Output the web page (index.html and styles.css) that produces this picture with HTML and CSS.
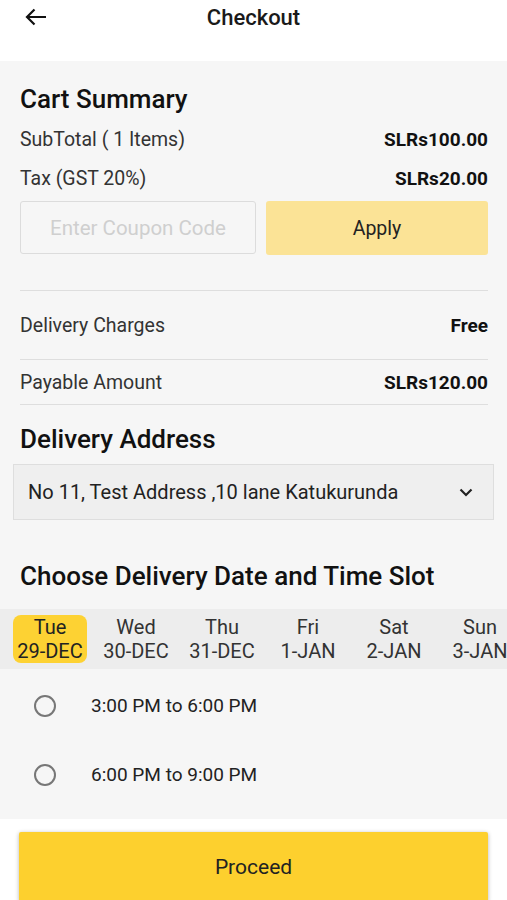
FILE: index.html
```html
<!DOCTYPE html>
<html lang="en">
<head>
  <meta charset="UTF-8">
  <meta name="viewport" content="width=device-width, initial-scale=1.0">
  <title>Checkout</title>
  <link rel="stylesheet" href="styles.css">
</head>
<body>
  <header class="topbar">
    <span class="back">
      <svg width="22" height="18" viewBox="0 0 22 18"><path d="M21 9H2M9.5 1.5L2 9l7.5 7.5" fill="none" stroke="#111" stroke-width="2.2"/></svg>
    </span>
    <h1>Checkout</h1>
  </header>

  <main class="content">
    <!-- 購物車 -->
    <section class="cart">
      <h2>Cart Summary</h2>
      <div class="row tight">
        <span>SubTotal ( 1 Items)</span>
        <b>SLRs100.00</b>
      </div>
      <div class="row tight">
        <span>Tax (GST 20%)</span>
        <b>SLRs20.00</b>
      </div>
      <div class="coupon">
        <div class="coupon-input">Enter Coupon Code</div>
        <button class="apply-btn">Apply</button>
      </div>
      <div class="row line">
        <span>Delivery Charges</span>
        <b>Free</b>
      </div>
      <div class="row line payable">
        <span>Payable Amount</span>
        <b>SLRs120.00</b>
      </div>
    </section>

    <section class="address">
      <h2>Delivery Address</h2>
      <div class="select">
        <span>No 11, Test Address ,10 lane Katukurunda</span>
        <svg width="14" height="9" viewBox="0 0 14 9"><path d="M1.5 1.5L7 7l5.5-5.5" fill="none" stroke="#222" stroke-width="2.2"/></svg>
      </div>
    </section>

    <section class="slot">
      <h2>Choose Delivery Date and Time Slot</h2>
      <div class="dates">
        <div class="date active"><span>Tue</span><span>29-DEC</span></div>
        <div class="date"><span>Wed</span><span>30-DEC</span></div>
        <div class="date"><span>Thu</span><span>31-DEC</span></div>
        <div class="date"><span>Fri</span><span>1-JAN</span></div>
        <div class="date"><span>Sat</span><span>2-JAN</span></div>
        <div class="date"><span>Sun</span><span>3-JAN</span></div>
      </div>
      <label class="time"><i class="radio"></i>3:00 PM to 6:00 PM</label>
      <label class="time"><i class="radio"></i>6:00 PM to 9:00 PM</label>
    </section>
  </main>

  <div class="footer">
    <button class="proceed-btn">Proceed</button>
  </div>
</body>
</html>
```

FILE: styles.css
```css
body {
  margin: 0;
  font-family: Roboto, "Liberation Sans", sans-serif;
  color: #1a1a1a;
  background: #fff;
  overflow: hidden;
}

/* 標題列 */
.topbar {
  height: 61px;
  display: flex;
  align-items: flex-start;
  justify-content: center;
  position: relative;
  background: #fff;
}

.topbar h1 {
  margin: 5px 0 0;
  font-size: 22px;
  font-weight: 500;
  line-height: 26px;
}

.back {
  position: absolute;
  left: 25px;
  top: 8px;
}

.content {
  background: #f6f6f6;
  height: 758px;
  overflow: hidden;
}

h2 {
  margin: 0;
  font-size: 26px;
  font-weight: 500;
  line-height: 30px;
  color: #111;
}

.cart {
  padding: 23px 19px 0 20px;
}

.cart h2 {
  margin-bottom: 6px;
}

.row {
  display: flex;
  justify-content: space-between;
  align-items: center;
  font-size: 19.5px;
  color: #333;
}

.row b {
  font-weight: 700;
  color: #111;
  font-size: 19px;
}

.row.tight {
  height: 39px;
}

.row.line {
  border-top: 1px solid #dedede;
  height: 68px;
}

.row.payable {
  height: 44px;
  border-bottom: 1px solid #dedede;
}

.coupon {
  display: flex;
  gap: 10px;
  margin: 3px 0 35px;
}

.coupon-input {
  width: 236px;
  height: 53px;
  box-sizing: border-box;
  border: 1px solid #dcdcdc;
  border-radius: 3px;
  display: flex;
  align-items: center;
  justify-content: center;
  font-size: 20.5px;
  color: #cfcfcf;
}

.apply-btn {
  flex: 1;
  height: 54px;
  border: none;
  border-radius: 3px;
  background: #fbe396;
  font-family: inherit;
  font-size: 19.5px;
  color: #222;
}

.address {
  padding: 19px 13px 0;
}

.address h2 {
  padding-left: 7px;
}

.select {
  margin-top: 10px;
  height: 56px;
  box-sizing: border-box;
  border: 1px solid #dedede;
  background: #efefef;
  display: flex;
  justify-content: space-between;
  align-items: center;
  padding: 0 20px 0 14px;
  font-size: 20px;
  color: #222;
}

.slot h2 {
  padding: 41px 20px 0;
}

.dates {
  margin-top: 18px;
  height: 60px;
  background: #ededed;
  display: flex;
  align-items: center;
  padding-left: 13px;
  gap: 12px;
  white-space: nowrap;
}

.date {
  width: 74px;
  flex-shrink: 0;
  height: 48px;
  border-radius: 8px;
  display: flex;
  flex-direction: column;
  align-items: center;
  justify-content: center;
  font-size: 20px;
  line-height: 24px;
  color: #333;
}

.date.active {
  background: #fdd233;
  color: #222;
}

.time {
  display: flex;
  align-items: center;
  height: 69px;
  padding-left: 34px;
  font-size: 19px;
  color: #222;
}

.time:first-of-type {
  margin-top: 2px;
}

.radio {
  width: 18px;
  height: 18px;
  border: 2px solid #777;
  border-radius: 50%;
  margin-right: 35px;
}

/* 底部按鈕 */
.footer {
  padding: 13px 19px 0;
}

.proceed-btn {
  width: 100%;
  height: 70px;
  border: none;
  border-radius: 2px;
  background: #fdd02e;
  box-shadow: 0 1px 4px rgba(0, 0, 0, 0.3);
  font-family: inherit;
  font-size: 21px;
  color: #222;
}
```
